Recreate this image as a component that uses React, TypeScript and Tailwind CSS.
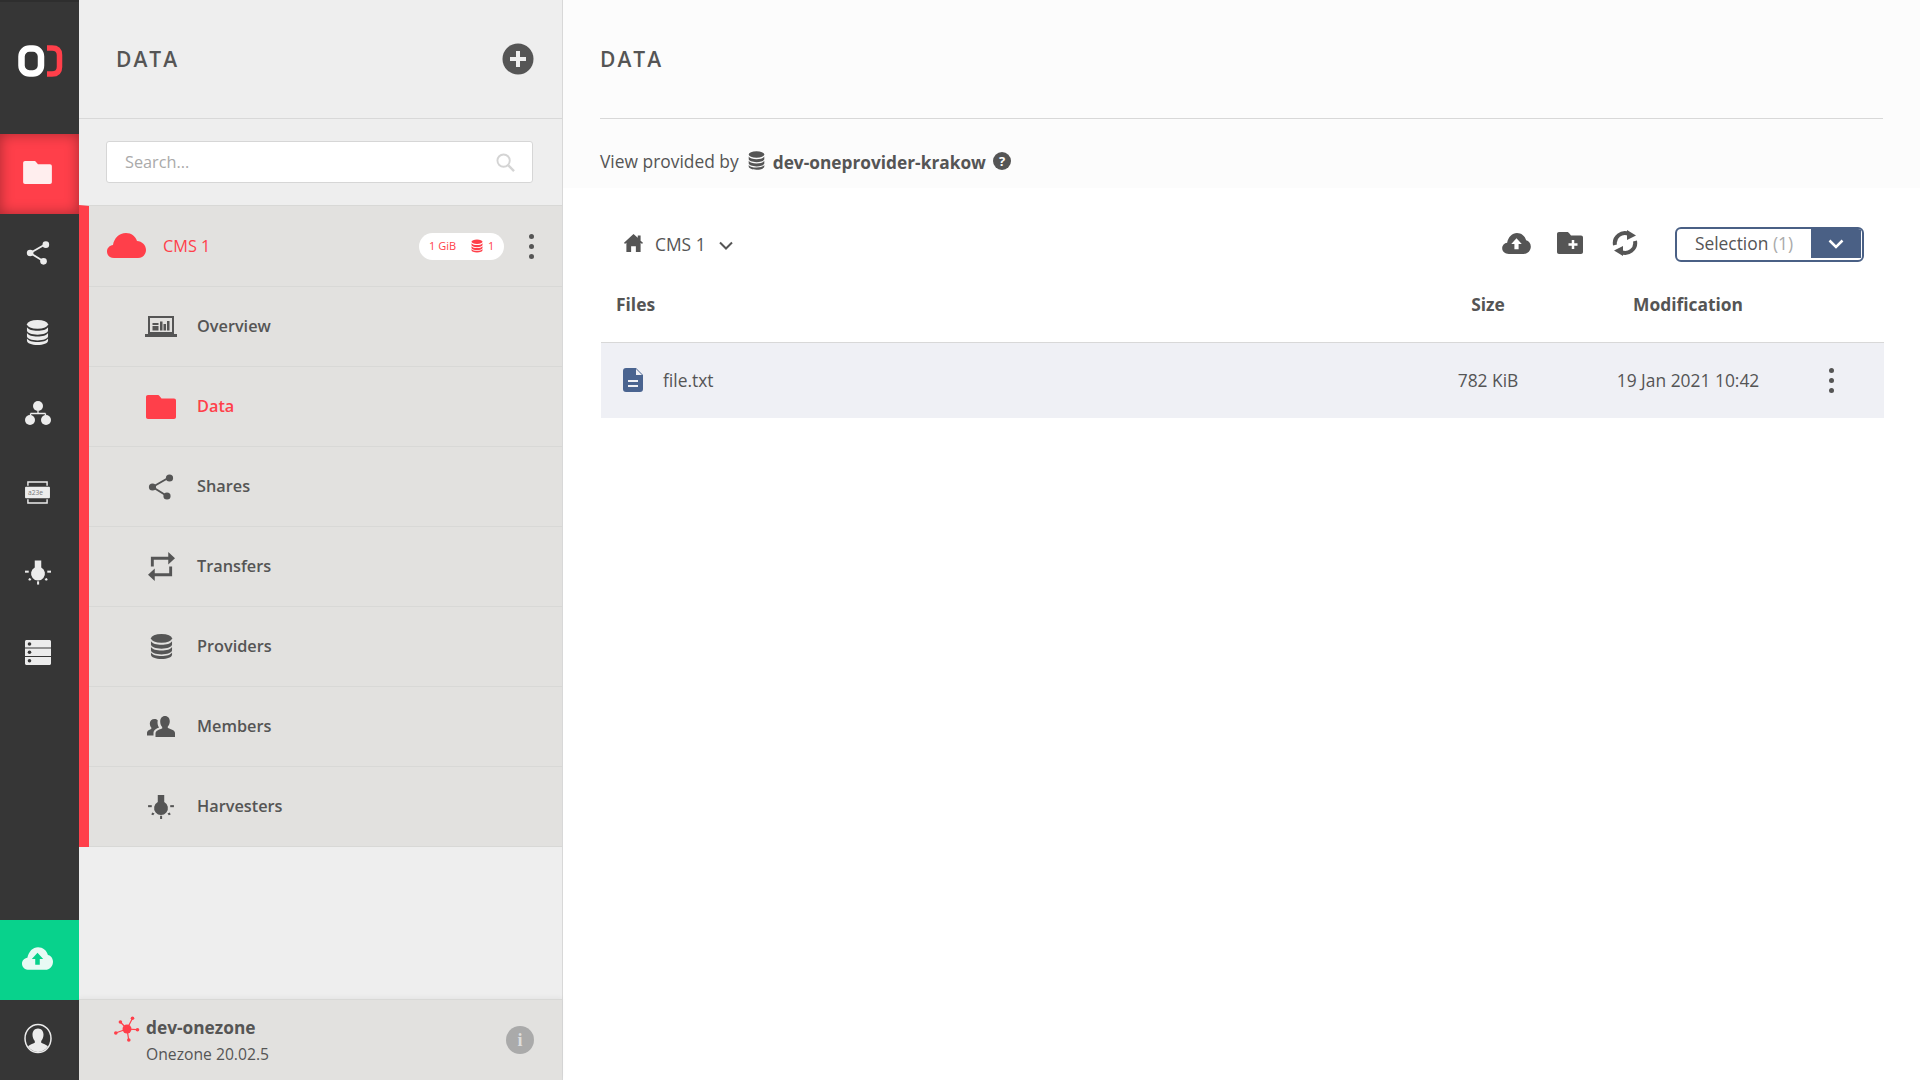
import React from "react";

type P = { className?: string };

const Folder = ({ className }: P) => (
  <svg viewBox="0 0 30 24" className={className} fill="currentColor">
    <path d="M2 0h9.500c1 0 1.600.5 2.200 1.200L15.500 3.500H28c1.200 0 2 .8 2 2V22c0 1.200-.8 2-2 2H2c-1.200 0-2-.8-2-2V2C0 .8.800 0 2 0z" />
  </svg>
);
const Share = ({ className }: P) => (
  <svg viewBox="0 0 26 26" className={className} fill="currentColor" stroke="currentColor">
    <path d="M4.500 13L21 3.500M4.500 13L19 22" strokeWidth="2" fill="none" />
    <circle cx="4.500" cy="13" r="3.600" stroke="none" />
    <circle cx="21.500" cy="4" r="3.600" stroke="none" />
    <circle cx="19" cy="22" r="3.600" stroke="none" />
  </svg>
);
const Db = ({ className }: P) => (
  <svg viewBox="0 0 24 26" className={className} fill="currentColor">
    <ellipse cx="12" cy="4.500" rx="11" ry="4.500" />
    <path d="M1 7.500c1.500 2.600 6 3.600 11 3.600s9.500-1 11-3.600V11c0 2.500-5 4.300-11 4.300S1 13.500 1 11z" />
    <path d="M1 13.500c1.500 2.600 6 3.600 11 3.600s9.500-1 11-3.600V17c0 2.500-5 4.300-11 4.300S1 19.500 1 17z" />
    <path d="M1 19.200c1.500 2.600 6 3.600 11 3.600s9.500-1 11-3.600V21.500C23 24 18 26 12 26S1 24 1 21.500z" />
  </svg>
);
const Groups = ({ className }: P) => (
  <svg viewBox="0 0 26 24" className={className} fill="currentColor">
    <circle cx="13" cy="5" r="5" />
    <circle cx="5" cy="19" r="5" />
    <circle cx="21" cy="19" r="5" />
    <path d="M13 10v2.500M5.500 12.500v2M20.500 12.500v2M5.500 12.500h15" stroke="currentColor" strokeWidth="1.300" fill="none" />
  </svg>
);
const Tokens = ({ className }: P) => (
  <svg viewBox="0 0 28 24" className={className}>
    <path d="M4 5V1h20v4M4 19v4h20v-4" fill="none" stroke="currentColor" strokeWidth="1.500" />
    <rect x="1" y="6" width="26" height="12" rx="1" fill="currentColor" />
    <text x="4" y="14.500" fontSize="7" fill="#777" fontFamily="'Open Sans', sans-serif">a23e</text>
  </svg>
);
const Harvester = ({ className }: P) => (
  <svg viewBox="0 0 28 26" className={className} fill="currentColor">
    <path d="M10.500 0h7v7.500a7.500 7.500 0 1 1-7 0z" />
    <rect x="0" y="11" width="4" height="2.200" />
    <rect x="24" y="11" width="4" height="2.200" />
    <rect x="13" y="22.500" width="2.200" height="3.500" />
    <path d="M4.500 19l2.500 1-1.500 2-2-1zM23.500 19l-2.500 1 1.500 2 2-1z" />
  </svg>
);
const Clusters = ({ className }: P) => (
  <svg viewBox="0 0 26 25" className={className} fill="currentColor">
    <path d="M1.500 0h23c.8 0 1.500.6 1.500 1.500V7.500H0V1.500C0 .6.700 0 1.500 0zM0 8.500h26v7.500H0zM0 17h26v6.500c0 .9-.7 1.500-1.500 1.500h-23C.7 25 0 24.400 0 23.500z" />
    <circle cx="4.500" cy="4" r="1.800" fill="#363636" />
    <circle cx="4.500" cy="12.200" r="1.800" fill="#363636" />
    <circle cx="4.500" cy="20.700" r="1.800" fill="#363636" />
  </svg>
);
const CloudUp = ({ className, arrow }: P & { arrow: string }) => (
  <svg viewBox="0 0 30 22" className={className}>
    <path fill="currentColor" d="M7 22C3 22 0 19.500 0 16c0-3 2.200-5.400 5.200-5.800C6.500 4 10.500 0 15.500 0c4.700 0 8.500 3.200 9.600 7.600 2.800.6 4.900 3.300 4.900 6.600 0 4.300-3.300 7.800-7.500 7.800z" />
    <path fill={arrow} d="M15 5.500l5.500 6h-3.300V17h-4.400v-5.500H9.500z" />
  </svg>
);
const User = ({ className }: P) => (
  <svg viewBox="0 0 28 30" className={className}>
    <ellipse cx="14" cy="15" rx="13" ry="14" fill="none" stroke="currentColor" strokeWidth="1.500" />
    <path fill="currentColor" d="M14 5c3.500 0 5.500 2.800 5.500 6.200 0 2.500-1 4.800-2.300 6.200v1.800c2 1.200 5 1.900 6.800 3.600C21.500 26.500 18 28.500 14 28.500S6.500 26.500 4 22.800c1.800-1.700 4.800-2.400 6.800-3.600v-1.800C9.500 16 8.500 13.700 8.500 11.200 8.500 7.800 10.500 5 14 5z" />
  </svg>
);
const Overview = ({ className }: P) => (
  <svg viewBox="0 0 32 21" className={className} fill="currentColor">
    <path d="M3 0h26v18H3zM5 2v14h22V2z" fillRule="evenodd" />
    <rect x="0" y="18" width="32" height="3" />
    <rect x="7.500" y="7" width="6" height="2" />
    <rect x="7.500" y="10" width="6" height="4.500" />
    <rect x="15" y="5.500" width="2.500" height="9" />
    <rect x="18.500" y="8" width="2.500" height="6.500" />
    <rect x="22" y="5" width="2.500" height="9.500" />
  </svg>
);
const Transfers = ({ className }: P) => (
  <svg viewBox="0 0 28 30" className={className} fill="currentColor">
    <path d="M3 15V5h18V0l7 6.500-7 6.500V8H6v7zM25 15v10H7v5l-7-6.500L7 17v5h15v-7z" />
  </svg>
);
const Members = ({ className }: P) => (
  <svg viewBox="0 0 28 21" className={className} fill="currentColor">
    <path d="M18 0c3 0 4.800 2.300 4.800 5.200 0 2.200-.8 4-2 5.300v1.500c2 .8 7.200 2 7.200 5V21H8.500v-3.500c0-3 4.500-4.300 6.700-5v-1.500c-1.200-1.300-2-3.100-2-5.300C13.200 2.300 15 0 18 0z" />
    <path d="M7.500 3c1.300 0 2.400.5 3.200 1.300-.5 3 0 5.500 1.300 7.200-2.500 1-5.500 2.500-5.500 5.500V19.500H0V17c0-2.500 2.800-3.200 4.300-4v-1.400c-1-1-1.500-2.500-1.500-4C2.800 5 4.800 3 7.500 3z" />
  </svg>
);
const Dots = ({ className }: P) => (
  <div className={`flex flex-col items-center gap-[5px] ${className ?? ""}`}>
    <span className="w-[5px] h-[5px] rounded-full bg-[#555]" />
    <span className="w-[5px] h-[5px] rounded-full bg-[#555]" />
    <span className="w-[5px] h-[5px] rounded-full bg-[#555]" />
  </div>
);

const Rail = ({ children, active }: { children: React.ReactNode; active?: boolean }) => (
  <div className={`h-20 shrink-0 flex items-center justify-center pr-[4px] pb-[3px] ${active ? "bg-[#ff3f4a] text-[#ffeeee] shadow-[inset_0_0_14px_rgba(0,0,0,0.35)]" : "text-[#ececec]"}`}>
    {children}
  </div>
);

const nav = [
  { label: "Overview", icon: <Overview className="w-8 h-[21px]" /> },
  { label: "Data", red: true, icon: <Folder className="w-[30px] h-[24px]" /> },
  { label: "Shares", icon: <Share className="w-[26px] h-[26px]" /> },
  { label: "Transfers", icon: <Transfers className="w-[27px] h-[29px]" /> },
  { label: "Providers", icon: <Db className="w-[23px] h-[25px]" /> },
  { label: "Members", icon: <Members className="w-[28px] h-[21px]" /> },
  { label: "Harvesters", icon: <Harvester className="w-[26px] h-[24px]" /> },
];

export default function App() {
  return (
    <div className="flex h-[1080px] w-[1920px] overflow-hidden bg-white text-[#555] font-['Open_Sans',sans-serif]">
      <aside className="w-[79px] shrink-0 bg-[#363636] border-t-2 border-[#2e2e2e] flex flex-col">
        <div className="h-[132px] shrink-0 flex items-start justify-center pt-[43px]">
          <svg viewBox="0 0 46 32" className="w-[46px] h-[32px]">
            <rect x="4.500" y="3.500" width="19.500" height="25" rx="8" fill="none" stroke="#fff" strokeWidth="6.500" />
            <path d="M30 3h5q7.500 0 7.500 7v12q0 7-7.500 7h-5" fill="none" stroke="#ff3f4a" strokeWidth="5.500" />
          </svg>
        </div>
        <Rail active><Folder className="w-[29px] h-[23px]" /></Rail>
        <Rail><Share className="w-[24px] h-[24px]" /></Rail>
        <Rail><Db className="w-[23px] h-[25px]" /></Rail>
        <Rail><Groups className="w-[26px] h-[24px]" /></Rail>
        <Rail><Tokens className="w-[27px] h-[23px]" /></Rail>
        <Rail><Harvester className="w-[26px] h-[25px]" /></Rail>
        <Rail><Clusters className="w-[26px] h-[25px]" /></Rail>
        <div className="flex-1" />
        <div className="h-20 shrink-0 bg-[#08d28c] text-[#e8faf4] flex items-center justify-center pr-[4px] pb-[3px]">
          <CloudUp className="w-[31px] h-[23px]" arrow="#08d28c" />
        </div>
        <Rail><User className="w-[28px] h-[31px]" /></Rail>
      </aside>

      <section className="w-[484px] shrink-0 bg-[#eeeeee] border-r border-[#d8d8d8] flex flex-col">
        <div className="h-[119px] shrink-0 border-b border-[#d8d8d8] flex items-center justify-between pl-[37px] pr-[28px]">
          <h1 className="text-[21px] font-semibold tracking-[2px] text-[#555] mt-[1px]">DATA</h1>
          <svg viewBox="0 0 32 32" className="w-[32px] h-[32px] -mt-[1px]">
            <circle cx="16" cy="16" r="15.500" fill="#555" />
            <path d="M16 8v16M8 16h16" stroke="#eee" strokeWidth="4" />
          </svg>
        </div>
        <div className="h-[86px] shrink-0 pt-[22px] pl-[27px] pr-[29px]">
          <div className="h-[42px] bg-white border border-[#d6d6d6] rounded-[3px] flex items-center justify-between pl-[18px] pr-[17px]">
            <span className="text-[16.300px] text-[#aaaaaa]">Search...</span>
            <svg viewBox="0 0 20 20" className="w-[19px] h-[19px]" fill="none" stroke="#d4d4d4" strokeWidth="2">
              <circle cx="8" cy="8" r="6.500" />
              <path d="M13 13l6 6" strokeWidth="2.500" />
            </svg>
          </div>
        </div>
        <div className="border-l-[10px] border-[#ff3f4a] bg-[#e2e1df] border-t border-t-[#d8d8d6]">
          <div className="h-[81px] border-b border-[#d8d8d6] flex items-center pl-[18px] pr-[28px]">
            <svg viewBox="0 0 39 25" className="w-[39px] h-[25px] text-[#ff3f4a] -mt-[1px]" fill="currentColor">
              <path d="M7 25C3 25 0 22.500 0 18.500c0-3.500 2.600-6 6-6.500C7 5.500 12 0 19 0c5.500 0 9.500 3.500 11 8 5 .3 9 4.200 9 9 0 4.500-3.500 8-8 8z" />
            </svg>
            <span className="ml-[17px] text-[16.300px] font-medium text-[#ff3f4a]">CMS 1</span>
            <div className="ml-auto h-[27px] w-[85px] rounded-full bg-white flex items-center pl-[10px] text-[11px] font-medium text-[#ff3f4a]">
              <span>1 GiB</span>
              <Db className="ml-[15px] w-[12px] h-[14px]" />
              <span className="ml-[5px]">1</span>
            </div>
            <Dots className="ml-[25px]" />
          </div>
          {nav.map((n) => (
            <div key={n.label} className="h-20 border-b border-[#d8d8d6] flex items-center pl-[56px]">
              <div className={`w-8 flex justify-center ${n.red ? "text-[#ff3f4a]" : "text-[#555]"}`}>{n.icon}</div>
              <span className={`ml-[20px] text-[16.300px] font-semibold ${n.red ? "text-[#ff3f4a]" : "text-[#555]"}`}>{n.label}</span>
            </div>
          ))}
        </div>
        <div className="flex-1" />
        <div className="h-[81px] shrink-0 bg-[#e2e1df] border-t border-[#d8d8d6] shadow-[0_-2px_4px_rgba(0,0,0,0.04)] pl-[35px] pr-[28px] flex items-center justify-between">
          <div className="flex items-start">
            <svg viewBox="0 0 26 26" className="w-[26px] h-[26px] mt-[2px]" fill="#ff3f4a" stroke="#ff3f4a">
              <circle cx="13" cy="13" r="4.500" stroke="none" />
              <path d="M13 13L1.500 17M13 13L6.400 6M13 13L18.500 2.300M13 13L23 13.700M13 13L14.800 24.500" strokeWidth="1.200" />
              <circle cx="1.800" cy="17" r="1.800" stroke="none" />
              <circle cx="6.400" cy="6" r="1.800" stroke="none" />
              <circle cx="18.500" cy="2.300" r="1.800" stroke="none" />
              <circle cx="23.500" cy="13.700" r="1.800" stroke="none" />
              <circle cx="14.800" cy="24" r="1.800" stroke="none" />
            </svg>
            <div className="ml-[6px] mt-[2px]">
              <div className="text-[17.300px] font-bold leading-[24px] text-[#555]">dev-onezone</div>
              <div className="text-[15.700px] leading-[24px] mt-[2px] text-[#555]">Onezone 20.02.5</div>
            </div>
          </div>
          <div className="w-7 h-7 rounded-full bg-[#aaaaaa] text-[#dedede] flex items-center justify-center font-bold text-[18px] leading-none font-['Liberation_Serif',serif]">i</div>
        </div>
      </section>

      <main className="flex-1 min-w-0 flex flex-col">
        <div className="h-[188px] shrink-0 bg-[#fcfcfc] px-[37px]">
          <div className="h-[119px] border-b border-[#d8d8d8] flex items-center">
            <h2 className="text-[21px] font-semibold tracking-[2px] text-[#555] mt-[2px]">DATA</h2>
          </div>
          <div className="flex items-center h-[69px] pt-[16px] text-[17.400px]">
            <span>View provided by</span>
            <Db className="ml-[9px] w-[17px] h-[19px] -mt-[3px]" />
            <span className="ml-[8px] font-bold text-[17.300px] mt-[3px]">dev-oneprovider-krakow</span>
            <svg viewBox="0 0 18 18" className="ml-[7px] w-[18px] h-[18px] -mt-[1px]">
              <circle cx="9" cy="9" r="9" fill="#555" />
              <text x="9" y="14" textAnchor="middle" fontSize="13" fontWeight="700" fill="#fff" fontFamily="'Open Sans', sans-serif">?</text>
            </svg>
          </div>
        </div>

        <div className="ml-[38px] mr-[36px]">
          <div className="mt-[39px] h-[35px] flex items-center pl-[23px] pr-[20px]">
            <svg viewBox="0 0 20 19" className="w-[19px] h-[18px] -mt-[3px]" fill="#555">
              <path d="M10 0l4.500 4V1.500h3V7l2.500 2.300-1 1.200-1.500-1.200V19h-5v-6H7.500v6h-5V9.300L1 10.500 0 9.300z" />
            </svg>
            <span className="ml-[12px] text-[17.400px]">CMS 1</span>
            <svg viewBox="0 0 14 9" className="ml-[13px] w-[14px] h-[9px] mt-[2px]" fill="none" stroke="#555" strokeWidth="2">
              <path d="M1 1.500l6 6 6-6" />
            </svg>
            <div className="ml-auto flex items-center">
              <CloudUp className="w-[31px] h-[21px] text-[#555] -mt-[3px] -ml-[1px]" arrow="#ffffff" />
              <svg viewBox="0 0 26 22" className="ml-[25px] w-[26px] h-[22px] -mt-[3px]">
                <path fill="#555" d="M2 0h8c1 0 1.500.5 2 1l2 2.500h10c1.200 0 2 .8 2 2V20c0 1.200-.8 2-2 2H2c-1.200 0-2-.8-2-2V2C0 .8.800 0 2 0z" />
                <path d="M16 8v9M11.500 12.500h9" stroke="#fff" strokeWidth="2.500" />
              </svg>
              <svg viewBox="0 0 26 26" className="ml-[29px] w-[26px] h-[26px] -mt-[3px]" fill="none" stroke="#555" strokeWidth="4">
                <path d="M3 15A10 10 0 0 1 17 4" />
                <path d="M23 11A10 10 0 0 1 9 22" />
                <path d="M15 0l9 5.500-9 4.500zM11 26l-9-5.500 9-4.500z" fill="#555" stroke="none" />
              </svg>
              <div className="ml-[37px] h-[35px] w-[189px] rounded-[6px] border-2 border-[#4a6085] flex overflow-hidden text-[17.400px]">
                <span className="flex-1 text-center leading-[27px] pt-[1px]">
                  Selection <span className="text-[#aaa]">(1)</span>
                </span>
                <span className="w-[50px] h-[29px] mr-[1px] bg-[#4a6085] flex items-center justify-center">
                  <svg viewBox="0 0 16 10" className="w-[16px] h-[10px]" fill="none" stroke="#fff" strokeWidth="2.500">
                    <path d="M1.500 1.500L8 8l6.500-6.500" />
                  </svg>
                </span>
              </div>
            </div>
          </div>

          <div className="h-[81px] border-b border-[#d8d8d8] grid grid-cols-[1fr_160px_240px_48px] items-center pl-[15px] pr-[28px] pt-[4px] text-[17.400px] font-bold">
            <span>Files</span>
            <span className="text-center">Size</span>
            <span className="text-center">Modification</span>
          </div>
          <div className="h-[75px] bg-[#eff0f5] grid grid-cols-[1fr_160px_240px_48px] items-center pl-[22px] pr-[28px] text-[17.400px]">
            <div className="flex items-center">
              <svg viewBox="0 0 20 24" className="w-[20px] h-[24px]">
                <path fill="#4a6490" d="M3 0h10l7 7v14c0 2-1 3-3 3H3c-2 0-3-1-3-3V3c0-2 1-3 3-3z" />
                <path fill="#eff0f5" d="M13 1v6h6z" />
                <path stroke="#eff0f5" strokeWidth="2.200" d="M5 13h10M5 18h10" />
              </svg>
              <span className="ml-[20px]">file.txt</span>
            </div>
            <span className="text-center">782 KiB</span>
            <span className="text-center">19 Jan 2021 10:42</span>
            <Dots className="-ml-[2px]" />
          </div>
        </div>
      </main>
    </div>
  );
}
